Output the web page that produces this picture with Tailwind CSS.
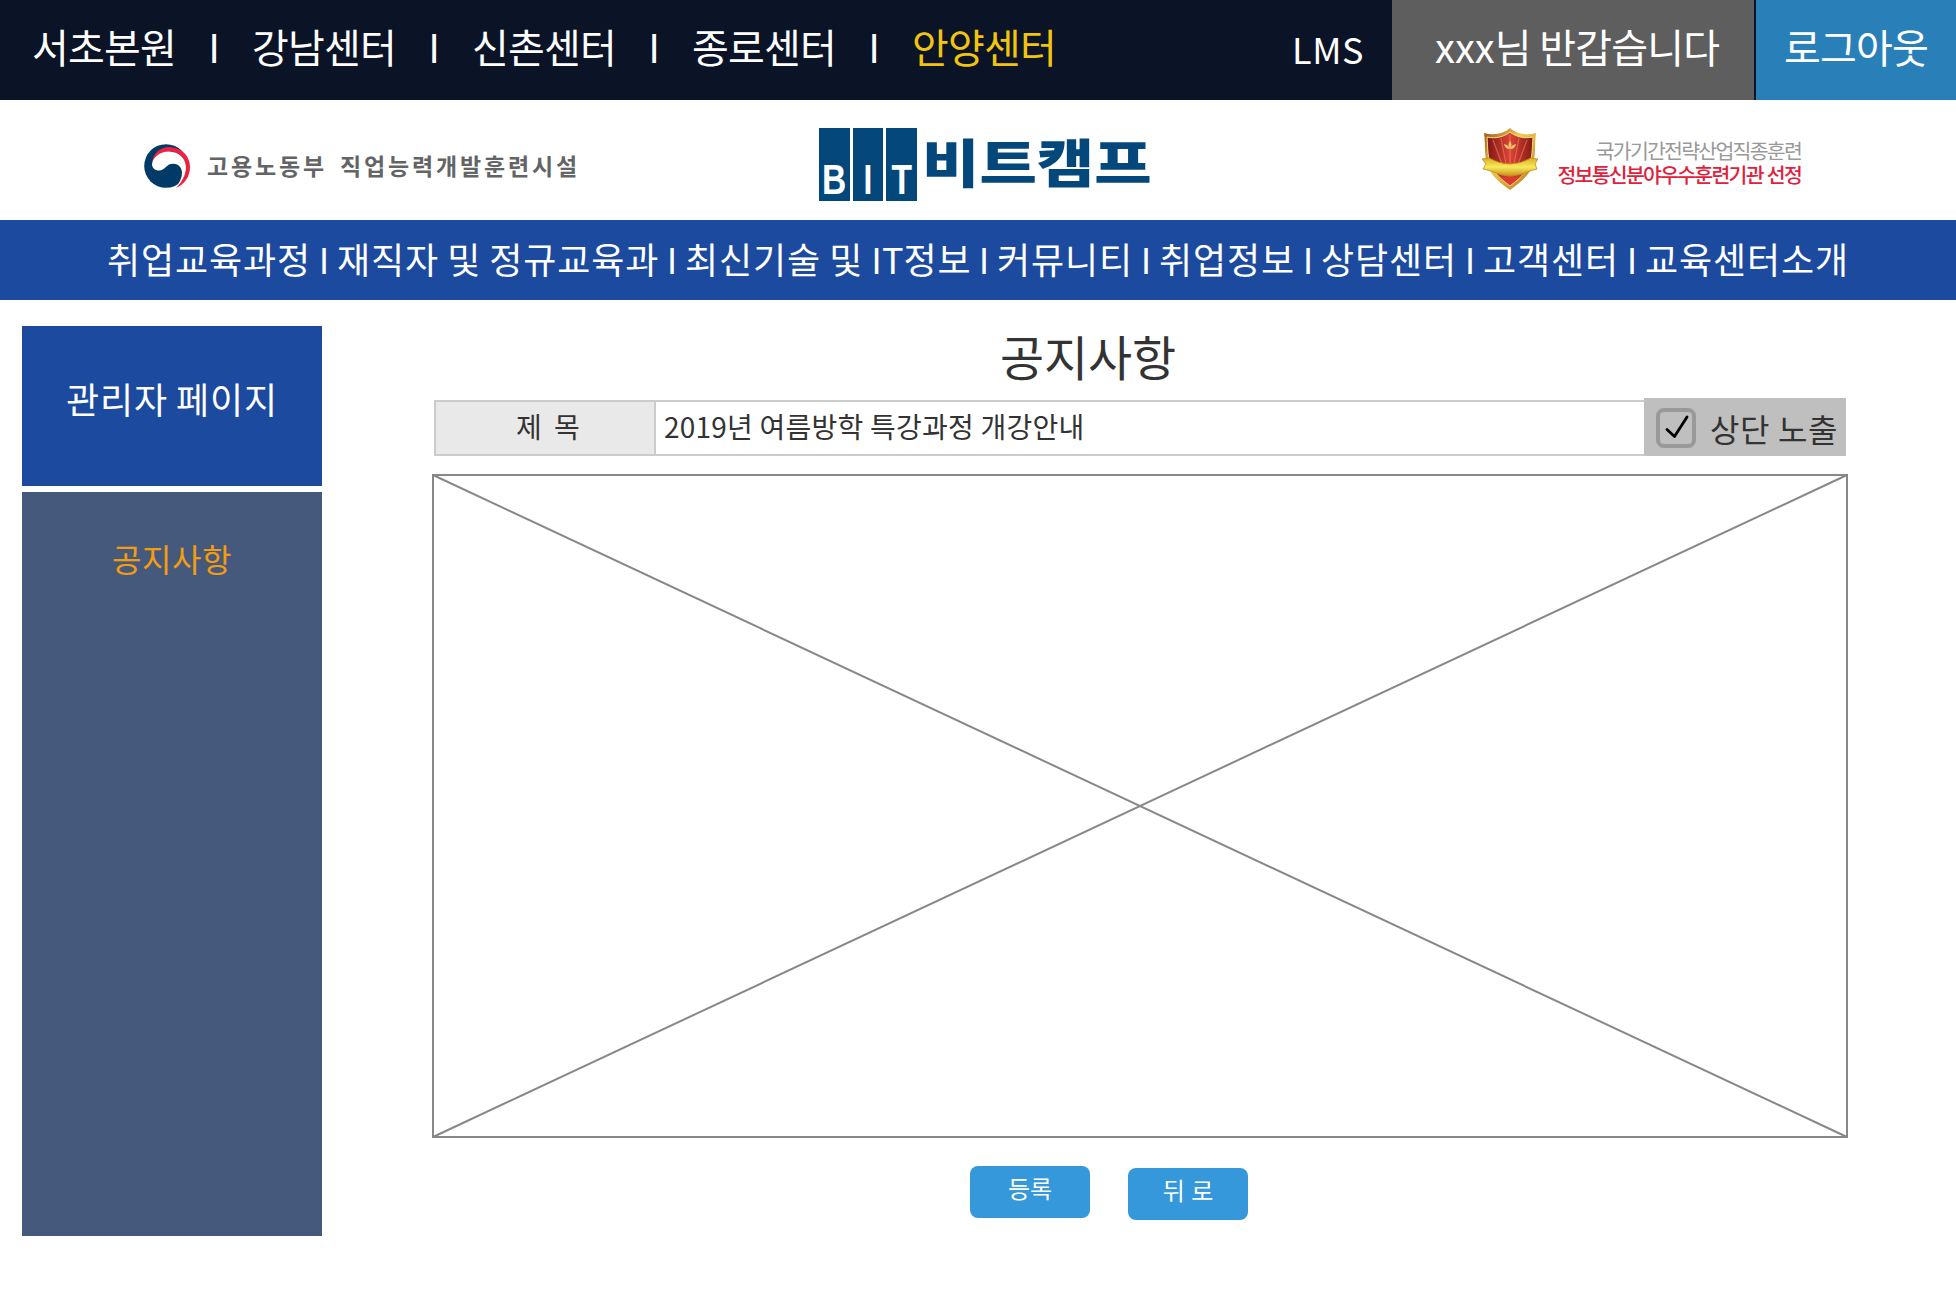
<!DOCTYPE html>
<html lang="ko">
<head>
<meta charset="utf-8">
<title>비트캠프 관리자 - 공지사항</title>
<script src="https://cdn.jsdelivr.net/npm/@tailwindcss/browser@4"></script>
</head>
<body class="w-[1956px] h-[1290px] overflow-hidden bg-white font-['Noto_Sans_CJK_KR',sans-serif] text-[#333]">
<div class="h-full flex flex-col">
  <div class="h-[100px] flex bg-[#0b1426] text-white text-[40px] leading-[93px] tracking-[-0.8px]">
    <div class="flex pl-8">
      <a class="w-36">서초본원</a><span class="w-[76px] text-center tracking-normal">I</span>
      <a class="w-36">강남센터</a><span class="w-[76px] text-center tracking-normal">I</span>
      <a class="w-36">신촌센터</a><span class="w-[76px] text-center tracking-normal">I</span>
      <a class="w-36">종로센터</a><span class="w-[76px] text-center tracking-normal">I</span>
      <a class="w-36 text-[#f1c40f]">안양센터</a>
    </div>
    <a class="ml-auto w-[100px] text-[36px] leading-[97px] tracking-[0.6px]">LMS</a>
    <div class="w-[362px] bg-[#5e5e5e] pl-[43px] [word-spacing:-2px]"><span class="tracking-normal">xxx</span>님 반갑습니다</div>
    <a class="ml-0.5 w-[200px] bg-[#2980b9] pl-[28px]">로그아웃</a>
  </div>

  <header class="h-[120px] flex">
    <div class="flex items-start pl-36 w-[819px]">
      <svg class="mt-11 w-[46px] h-11" viewBox="0 0 46 44">
        <circle cx="22" cy="22" r="21.8" fill="#003a66"/>
        <path d="M8 20 C8 10 16 2.800 26 3 C38 4 46 12 46 23 C46 33 40 41 32 43.700 C38 38 42 31 42 22 C41 13 34 7.500 26 7.500 C16 7.500 9 13 8 20 Z" fill="#f2203e"/>
        <path d="M8 20 C9 13 16 7.500 25 7.500 C35 8 41.500 14 42 23 C42 31 38 38 32 43 C36 38 38 33 38 29 C38 23 34 19.700 29 19.700 C22 19.700 21 26.500 15 26.500 C11 26.500 8 24 8 20 Z" fill="#fff"/>
      </svg>
      <div class="pl-[17px] pt-[41px] flex gap-[13px] text-[23px] leading-[48px] font-bold text-[#636466] tracking-[2.840px]"><span>고용노동부</span><span>직업능력개발훈련시설</span></div>
    </div>
    <div class="flex pt-7 w-[663px]">
      <div class="flex gap-[3px] h-[73px] font-['Liberation_Sans',sans-serif] font-bold text-white text-[42px] text-center leading-[103px]">
        <span class="w-[30.500px] bg-[#04487b]"><span class="inline-block scale-x-[0.8]">B</span></span>
        <span class="w-[30.500px] bg-[#04487b]"><span class="inline-block scale-x-[0.75]">I</span></span>
        <span class="w-[31px] bg-[#04487b]"><span class="inline-block scale-x-[0.8]">T</span></span>
      </div>
      <div class="pl-[5px]"><div class="origin-left scale-x-[1.2] text-[52px] leading-[65px] font-black text-[#04487b]">비트캠프</div></div>
    </div>
    <div class="flex pt-[27px]">
      <svg class="w-14 h-16" viewBox="0 0 56 64">
        <defs>
          <linearGradient id="gold" x1="0" y1="0" x2="1" y2="1"><stop offset="0" stop-color="#9a4a14"/><stop offset=".4" stop-color="#f0cc50"/><stop offset="1" stop-color="#b9701c"/></linearGradient>
          <linearGradient id="red" x1="0" y1="0" x2="1" y2="0"><stop offset="0" stop-color="#7c1512"/><stop offset=".5" stop-color="#dc4536"/><stop offset="1" stop-color="#851a14"/></linearGradient>
          <linearGradient id="ribbon" x1="0" y1="0" x2="0" y2="1"><stop offset="0" stop-color="#d9b020"/><stop offset=".5" stop-color="#f8ea5c"/><stop offset="1" stop-color="#c98f1a"/></linearGradient>
        </defs>
        <path d="M28 1 C23 6 12 9 2 6 C4 18 1 32 8 44 C13 52 21 58 28 63 C35 58 43 52 48 44 C55 32 52 18 54 6 C44 9 33 6 28 1Z" fill="url(#gold)"/>
        <path d="M28 5 C22 10 13 12 5 10 C6 22 5 32 11 42 C16 50 22 54 28 59 C34 54 40 50 45 42 C51 32 50 22 51 10 C43 12 34 10 28 5Z" fill="url(#red)" stroke="#f6dc80" stroke-width="1"/>
        <path d="M20 37 L11 13 M24 37 L19 11 M28 37 V8 M32 37 L37 11 M36 37 L45 13" stroke="#f08060" stroke-opacity=".6" stroke-width="1.200"/>
        <path d="M28 14 Q31 18 28 22 Q25 18 28 14Z M22 17 Q27 18 27.500 22 Q23 22 22 17Z M34 17 Q29 18 28.500 22 Q33 22 34 17Z" fill="#f7c66b"/>
        <path d="M0 32 L7 31 Q28 43 49 31 L56 32 L53 37 L55 42 L48 44 Q28 54 9 44 L1 42 L4 37Z" fill="url(#ribbon)" stroke="#c58c1c" stroke-width=".8"/>
        <path d="M17 49 Q28 52 39 49 L28 58Z" fill="#d93a2c"/>
      </svg>
      <div class="pt-[11px] w-[263px] flex flex-col items-end text-[20.500px] whitespace-nowrap">
        <div class="h-[24px] leading-[24px] tracking-[-1.750px] text-[#999]">국가기간전략산업직종훈련</div>
        <div class="h-[24px] leading-[24px] tracking-[-1.750px] text-[#e0213c] font-medium">정보통신분야우수훈련기관 선정</div>
      </div>
    </div>
  </header>

  <nav class="h-20 flex justify-center bg-[#1c4a9e] text-white text-[36px] leading-[77px] tracking-[0.88px] [word-spacing:-2.800px] whitespace-nowrap">
    <a class="w-[204px]">취업교육과정</a><span class="w-[26px] text-center tracking-normal">I</span>
    <a class="w-[322px]">재직자 및 정규교육과</a><span class="w-[26px] text-center tracking-normal">I</span>
    <a class="w-[286px]">최신기술 및 <span class="tracking-normal">IT</span>정보</a><span class="w-[26px] text-center tracking-normal">I</span>
    <a class="w-[136px]">커뮤니티</a><span class="w-[26px] text-center tracking-normal">I</span>
    <a class="w-[136px]">취업정보</a><span class="w-[26px] text-center tracking-normal">I</span>
    <a class="w-[136px]">상담센터</a><span class="w-[26px] text-center tracking-normal">I</span>
    <a class="w-[136px]">고객센터</a><span class="w-[26px] text-center tracking-normal">I</span>
    <a class="w-[204px]">교육센터소개</a>
  </nav>

  <div class="flex flex-1">
    <aside class="ml-[22px] mt-[26px] w-[300px] flex flex-col gap-1.5 text-center">
      <div class="h-40 bg-[#1c4a9e] text-white text-[36px] leading-[145px] tracking-[0.88px] [word-spacing:-2.800px]">관리자 페이지</div>
      <div class="h-[744px] bg-[#45597d] text-[#f39c12] text-[32px] leading-[132px] tracking-[0.56px]">공지사항</div>
    </aside>
    <main class="ml-[110px] w-[1416px] flex flex-col">
      <h1 class="h-[98px] pr-[104px] text-center text-[48px] leading-[110px] tracking-[-0.16px]">공지사항</h1>
      <div class="h-[58px] px-0.5 flex items-end text-[28px]">
        <div class="h-14 w-[222px] border-2 border-[#ccc] bg-[#e9e9e9] pl-1.5 text-center leading-[48px] tracking-[0.24px] [word-spacing:-2px] whitespace-pre">제  목</div>
        <div class="h-14 flex-1 border-y-2 border-[#ccc] pl-2 leading-[48px] tracking-[0.24px] [word-spacing:-1.600px]">2019년 여름방학 특강과정 개강안내</div>
        <label class="h-[58px] w-[202px] bg-[#bfbfbf] pl-3 flex items-center text-[32px] tracking-[0.56px] [word-spacing:-1.600px] leading-[58px]">
          <svg class="mt-0.5 w-10 h-10" viewBox="0 0 40 40" fill="none"><rect x="2" y="2" width="36" height="36" rx="6" stroke="#999" stroke-width="4"/><path d="M11 21.500 L18.500 28.500 L31 9" stroke="#000" stroke-width="2.800" stroke-linecap="round" stroke-linejoin="round"/></svg>
          <span class="pl-3.5 pt-0.5">상단 노출</span>
        </label>
      </div>
      <svg class="mt-[18px] w-[1416px] h-[664px]" viewBox="0 0 1416 664" fill="none" stroke="#888" stroke-width="2"><rect x="1" y="1" width="1414" height="662"/><path d="M1 1 L1415 663 M1415 1 L1 663"/></svg>
      <div class="mt-7 pl-[538px] flex gap-[38px] text-2xl text-white text-center tracking-[-0.08px]">
        <button class="w-[120px] h-[52px] rounded-lg bg-[#3498db] flex justify-center leading-[43px]">등록</button>
        <button class="mt-0.5 w-[120px] h-[52px] rounded-lg bg-[#3498db] flex justify-center leading-[43px]">뒤 로</button>
      </div>
    </main>
  </div>
</div>
</body>
</html>
